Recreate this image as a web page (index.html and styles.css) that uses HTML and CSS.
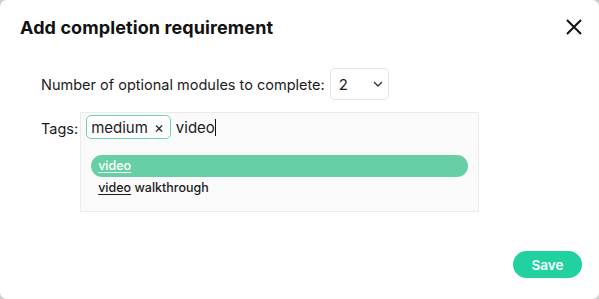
FILE: index.html
```html
<!DOCTYPE html>
<html lang="en">
<head>
  <meta charset="UTF-8" />
  <title>Add completion requirement</title>
  <link rel="stylesheet" href="styles.css">
</head>
<body>
  <div class="modal">
    <div class="modal-header">
      <h2>Add completion requirement</h2>
      <button class="fechar" aria-label="Close">
        <svg width="16" height="16" viewBox="0 0 16 16"><path d="M1 1 L15 15 M15 1 L1 15" stroke="#111" stroke-width="2" fill="none"/></svg>
      </button>
    </div>

    <div class="modal-body">
      <div class="linha">
        <span>Number of optional modules to complete:</span>
        <div class="seletor">
          <span>2</span>
          <svg width="10" height="6" viewBox="0 0 10 6"><path d="M1 1 L5 5 L9 1" stroke="#333" stroke-width="1.3" fill="none"/></svg>
        </div>
      </div>

      <div class="linha topo">
        <span class="rotulo">Tags:</span>
        <div class="caixa-tags">
          <div class="entrada">
            <span class="tag">medium <b>×</b></span>
            <span class="digitado">video</span><span class="cursor"></span>
          </div>
          <ul class="sugestoes">
            <li class="ativo"><u>video</u></li>
            <li><u>video</u> walkthrough</li>
          </ul>
        </div>
      </div>
    </div>

    <div class="modal-footer">
      <button class="salvar">Save</button>
    </div>
  </div>
</body>
</html>
```

FILE: styles.css
```css
body {
  margin: 0;
  background: #cfcfcf;
  font-family: Inter, "Open Sans", sans-serif;
  color: #1c1c1c;
}
.modal {
  width: 599px;
  height: 299px;
  background: #fff;
  border-radius: 7px;
  display: flex;
  flex-direction: column;
  box-sizing: border-box;
}
.modal-header {
  display: flex;
  justify-content: space-between;
  align-items: center;
  padding: 14px 17px 0 20px;
  height: 26px;
}
.modal-header h2 {
  margin: 0;
  font-size: 18px;
  font-weight: 700;
  color: #111;
  letter-spacing: 0.1px;
}
.fechar {
  background: none;
  border: none;
  padding: 0;
  width: 16px;
  height: 16px;
  display: flex;
}
.modal-body {
  padding: 28px 0 0 41px;
  display: flex;
  flex-direction: column;
  gap: 12px;
}
.linha {
  display: flex;
  align-items: center;
  gap: 5px;
  font-size: 14.5px;
}
.linha.topo {
  align-items: flex-start;
  gap: 2px;
}
.rotulo {
  margin-top: 8px;
}
.seletor {
  width: 59px;
  height: 32px;
  box-sizing: border-box;
  border: 1px solid #e2e2e2;
  border-radius: 5px;
  display: flex;
  align-items: center;
  justify-content: space-between;
  padding: 0 5px 0 8px;
  font-size: 15px;
}
.caixa-tags {
  width: 399px;
  height: 100px;
  box-sizing: border-box;
  background: #fafafa;
  border: 1px solid #ebebeb;
  padding: 2px 10px 0 5px;
}
.entrada {
  display: flex;
  align-items: center;
  height: 24px;
}
.tag {
  display: inline-flex;
  align-items: center;
  gap: 6px;
  height: 24px;
  box-sizing: border-box;
  border: 1.5px solid #6dd3ae;
  border-radius: 5px;
  padding: 0 6px 0 4px;
  font-size: 15px;
  background: #fff;
}
.tag b {
  font-weight: 400;
  font-size: 15px;
}
.digitado {
  margin-left: 5px;
  font-size: 15px;
}
.cursor {
  display: inline-block;
  width: 1px;
  height: 17px;
  background: #111;
}
.sugestoes {
  list-style: none;
  margin: 16px 0 0 5px;
  padding: 0;
  font-size: 12.5px;
  font-weight: 500;
}
.sugestoes li {
  height: 22px;
  line-height: 22px;
  padding-left: 7px;
  border-radius: 11px;
}
.sugestoes li.ativo {
  background: #66cfa5;
  color: #fff;
}
.sugestoes u {
  text-underline-offset: 2px;
}
.modal-footer {
  margin-top: auto;
  display: flex;
  justify-content: flex-end;
  padding: 0 17px 21px 0;
}
.salvar {
  width: 69px;
  height: 27px;
  border: none;
  border-radius: 14px;
  background: #21d1a0;
  color: #fff;
  font-family: inherit;
  font-size: 13.5px;
  font-weight: 600;
}
```
